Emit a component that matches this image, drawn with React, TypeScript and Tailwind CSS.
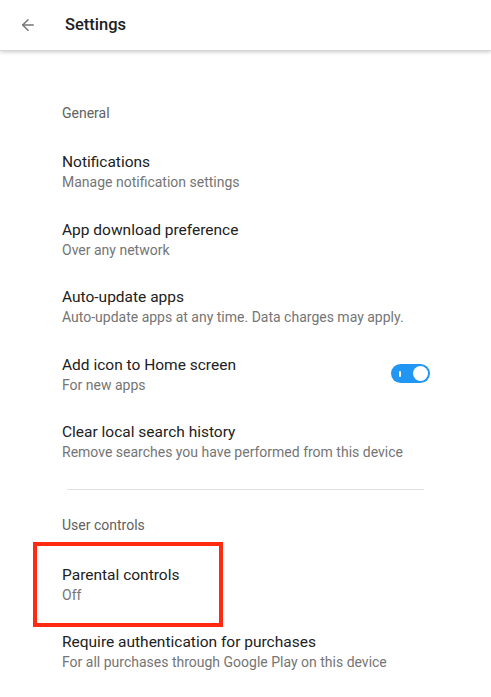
import { ArrowLeft } from "lucide-react";

type Row = { title: string; subtitle: string; toggle?: boolean; marked?: boolean };

const GENERAL: Row[] = [
  { title: "Notifications", subtitle: "Manage notification settings" },
  { title: "App download preference", subtitle: "Over any network" },
  { title: "Auto-update apps", subtitle: "Auto-update apps at any time. Data charges may apply." },
  { title: "Add icon to Home screen", subtitle: "For new apps", toggle: true },
  { title: "Clear local search history", subtitle: "Remove searches you have performed from this device" },
];

const USER_CONTROLS: Row[] = [
  { title: "Parental controls", subtitle: "Off", marked: true },
  { title: "Require authentication for purchases", subtitle: "For all purchases through Google Play on this device" },
];

function Toggle() {
  return (
    <div className="w-[39px] h-[19px] rounded-full bg-[#2196f3] flex items-center justify-between pl-[8px] pr-[2px]">
      <span className="w-[1.5px] h-[6px] bg-white rounded-full" />
      <span className="w-[15px] h-[15px] rounded-full bg-white" />
    </div>
  );
}

function SettingRow({ row }: { row: Row }) {
  return (
    <div className="relative h-[67.5px] flex items-center pl-[62px] pr-[61px]">
      {row.marked && (
        <div className="absolute left-[33px] top-[-8px] w-[190px] h-[85px] border-[4px] border-[#ff2a10]" />
      )}
      <div className="flex-1 flex flex-col pt-[2px]">
        <span className="text-[15.5px] leading-[20px] text-[#212121]">{row.title}</span>
        <span className="text-[14px] leading-[20px] text-[#757575]">{row.subtitle}</span>
      </div>
      {row.toggle && <Toggle />}
    </div>
  );
}

export default function App() {
  return (
    <div className="w-[491px] h-[697px] bg-white overflow-hidden font-['Roboto',sans-serif]">
      <div className="h-[51px] flex items-center shadow-[0_1px_4px_rgba(0,0,0,0.22)] border-b border-[#d9d9d9] relative z-10">
        <ArrowLeft className="ml-[19px] w-[18px] h-[18px] text-[#757575]" strokeWidth={2} />
        <span className="ml-[28px] text-[16.5px] font-medium text-[#212121] pt-[1px]">Settings</span>
      </div>

      <div className="pt-[52px] h-[86.5px]">
        <span className="block pl-[62px] text-[14px] leading-[20px] text-[#616161]">General</span>
      </div>
      {GENERAL.map((row) => (
        <SettingRow key={row.title} row={row} />
      ))}

      <div className="mt-[14px] mx-[67px] h-px bg-[#e0e0e0]" />

      <div className="pt-[25px] h-[60px]">
        <span className="block pl-[62px] text-[14px] leading-[20px] text-[#616161]">User controls</span>
      </div>
      {USER_CONTROLS.map((row) => (
        <SettingRow key={row.title} row={row} />
      ))}
    </div>
  );
}
